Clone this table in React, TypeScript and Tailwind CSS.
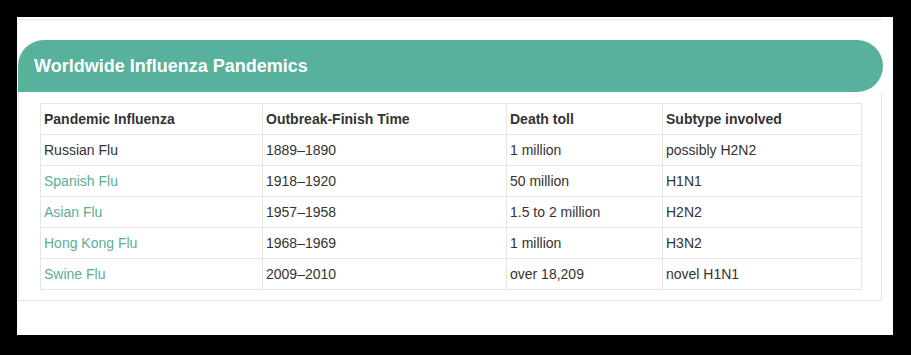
const rows = [
  { name: 'Russian Flu', link: false, time: '1889–1890', toll: '1 million', subtype: 'possibly H2N2' },
  { name: 'Spanish Flu', link: true, time: '1918–1920', toll: '50 million', subtype: 'H1N1' },
  { name: 'Asian Flu', link: true, time: '1957–1958', toll: '1.5 to 2 million', subtype: 'H2N2' },
  { name: 'Hong Kong Flu', link: true, time: '1968–1969', toll: '1 million', subtype: 'H3N2' },
  { name: 'Swine Flu', link: true, time: '2009–2010', toll: 'over 18,209', subtype: 'novel H1N1' },
];

export default function App() {
  return (
    <div className="w-[911px] h-[355px] bg-black pt-[17px] pl-[17px] font-['Liberation_Sans',Arial,sans-serif]">
      <div className="w-[876px] h-[318px] bg-white pl-px">
        <div className="h-[2px]" />
        <div className="w-[865px] h-px bg-[#ececec]" />
        <div className="h-[20px]" />
        <div className="w-[865px] h-[52px] bg-[#57b19b] rounded-tl-[26px] rounded-r-[26px] flex items-center pl-[16px] pt-px">
          <h2 className="text-white text-[18px] font-bold">Worldwide Influenza Pandemics</h2>
        </div>
        <div className="w-[864px] border border-t-0 border-[#e6e6e6] px-[21px] pt-[11px] pb-[10px]">
          <table className="w-[821px] border-collapse text-[14px] text-[#333] table-fixed">
            <colgroup>
              <col className="w-[222px]" />
              <col className="w-[244px]" />
              <col className="w-[156px]" />
              <col className="w-[199px]" />
            </colgroup>
            <thead>
              <tr className="h-[31px]">
                {['Pandemic Influenza', 'Outbreak-Finish Time', 'Death toll', 'Subtype involved'].map((h) => (
                  <th key={h} className="border border-[#e6e6e6] px-[3px] pt-px text-left font-bold">{h}</th>
                ))}
              </tr>
            </thead>
            <tbody>
              {rows.map((r) => (
                <tr key={r.name} className="h-[31px]">
                  <td className={`border border-[#e6e6e6] px-[3px] pt-px ${r.link ? 'text-[#5aae99]' : ''}`}>{r.name}</td>
                  <td className="border border-[#e6e6e6] px-[3px] pt-px">{r.time}</td>
                  <td className="border border-[#e6e6e6] px-[3px] pt-px">{r.toll}</td>
                  <td className="border border-[#e6e6e6] px-[3px] pt-px">{r.subtype}</td>
                </tr>
              ))}
            </tbody>
          </table>
        </div>
      </div>
    </div>
  );
}
